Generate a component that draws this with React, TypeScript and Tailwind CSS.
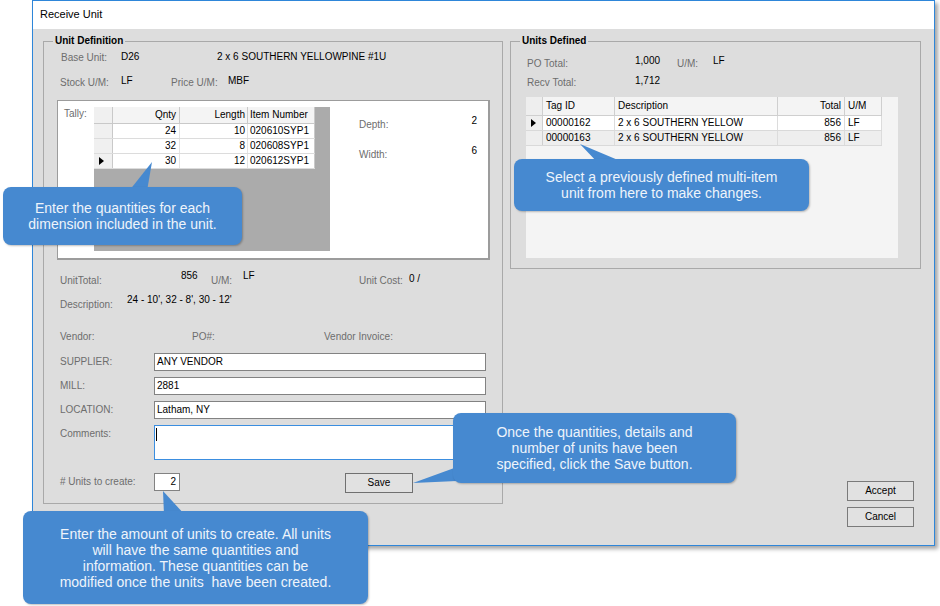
import React from "react";

const Arrow = () => (
    <svg width="5" height="8" viewBox="0 0 5 8" className="block">
        <polygon points="0,0 5,4 0,8" fill="#000" />
    </svg>
);

const Label = ({ className = "", children }: { className?: string; children: React.ReactNode }) => (
    <span className={`text-[#6d6d6d] whitespace-nowrap ${className}`}>{children}</span>
);

const Value = ({ className = "", children }: { className?: string; children: React.ReactNode }) => (
    <span className={`text-black whitespace-nowrap ${className}`}>{children}</span>
);

const TALLY_ROWS = [
    { qnty: 24, length: 10, item: "020610SYP1" },
    { qnty: 32, length: 8, item: "020608SYP1" },
    { qnty: 30, length: 12, item: "020612SYP1" },
];

const UNITS = [
    { tag: "00000162", desc: "2 x 6 SOUTHERN YELLOW", total: 856, um: "LF" },
    { tag: "00000163", desc: "2 x 6 SOUTHERN YELLOW", total: 856, um: "LF" },
];

function TallyGrid() {
    return (
        <div className="mt-[6px] w-[236px] h-[144px] bg-[#ababab] flex flex-col">
            {/* header */}
            <div className="flex h-[17px] bg-[#f4f4f4] border-b border-[#c9c9c9] w-[221px]">
                <div className="w-[19px] border-r border-[#c9c9c9] bg-[#f0f0f0]" />
                <div className="w-[67px] border-r border-[#c9c9c9] flex items-center justify-end pr-[3px]">Qnty</div>
                <div className="w-[68px] border-r border-[#c9c9c9] flex items-center justify-end pr-[2px]">Length</div>
                <div className="w-[67px] border-r border-[#c9c9c9] flex items-center pl-[2px] whitespace-nowrap">Item Number</div>
            </div>
            {TALLY_ROWS.map((r, i) => (
                <div key={i} className="flex h-[15px] w-[221px] bg-white border-b border-[#dcdcdc]">
                    <div className="w-[19px] bg-[#f0f0f0] border-r border-[#c9c9c9] flex items-center pl-[5px]">
                        {i === 2 ? <Arrow /> : null}
                    </div>
                    <div className="w-[67px] border-r border-[#e3e3e3] flex items-center justify-end pr-[3px]">{r.qnty}</div>
                    <div className="w-[68px] border-r border-[#e3e3e3] flex items-center justify-end pr-[2px]">{r.length}</div>
                    <div className="w-[67px] border-r border-[#c9c9c9] flex items-center pl-[2px]">{r.item}</div>
                </div>
            ))}
        </div>
    );
}

function UnitsGrid() {
    return (
        <div className="mt-[6px] ml-[15px] w-[372px] h-[161px] bg-[#f4f4f4] flex flex-col">
            <div className="flex h-[19px] w-[356px] border-b border-[#cfcfcf]">
                <div className="w-[17px] bg-[#eeeeee] border-r border-[#cfcfcf]" />
                <div className="w-[72px] border-r border-[#cfcfcf] flex items-center pl-[3px]">Tag ID</div>
                <div className="w-[163px] border-r border-[#cfcfcf] flex items-center pl-[3px]">Description</div>
                <div className="w-[67px] border-r border-[#cfcfcf] flex items-center justify-end pr-[3px]">Total</div>
                <div className="w-[37px] border-r border-[#cfcfcf] flex items-center pl-[3px]">U/M</div>
            </div>
            {UNITS.map((u, i) => (
                <div
                    key={u.tag}
                    className={`flex h-[15px] w-[356px] border-b border-[#d9d9d9] ${i === 0 ? "bg-white" : "bg-[#eeeeee]"}`}
                >
                    <div className="w-[17px] bg-[#eeeeee] border-r border-[#cfcfcf] flex items-center pl-[5px]">
                        {i === 0 ? <Arrow /> : null}
                    </div>
                    <div className="w-[72px] border-r border-[#dcdcdc] flex items-center pl-[3px]">{u.tag}</div>
                    <div className="w-[163px] border-r border-[#dcdcdc] flex items-center pl-[3px]">{u.desc}</div>
                    <div className="w-[67px] border-r border-[#dcdcdc] flex items-center justify-end pr-[3px]">{u.total}</div>
                    <div className="w-[37px] border-r border-[#dcdcdc] flex items-center pl-[3px]">{u.um}</div>
                </div>
            ))}
        </div>
    );
}

const TextBox = ({ children }: { children?: React.ReactNode }) => (
    <div className="w-[332px] h-[18px] border border-[#828282] bg-white flex items-center px-[2px] text-black">
        {children}
    </div>
);

function UnitDefinition() {
    return (
        <div className="relative w-[460px] h-[463px] border border-[#a9a9a9] shrink-0 flex flex-col">
            <span className="absolute -top-[7px] left-[9px] px-[2px] bg-[#dddddd] font-bold leading-[12px] text-black">
                Unit Definition
            </span>

            <div className="mt-[8px] h-[16px] flex items-center pl-[17px]">
                <Label className="w-[60px]">Base Unit:</Label>
                <Value className="w-[96px] -translate-y-[1px]">D26</Value>
                <Value className="-translate-y-[1px]">2 x 6 SOUTHERN YELLOWPINE #1U</Value>
            </div>

            <div className="mt-[9px] h-[16px] flex items-center pl-[16px]">
                <Label className="w-[61px]">Stock U/M:</Label>
                <Value className="w-[50px] -translate-y-[2px]">LF</Value>
                <Label className="w-[57px]">Price U/M:</Label>
                <Value className="-translate-y-[2px]">MBF</Value>
            </div>

            {/* Tally panel */}
            <div className="mt-[9px] ml-[13px] w-[433px] h-[160px] border border-[#9c9c9c] border-r-2 border-b-2 bg-white flex">
                <Label className="w-[36px] pl-[6px] pt-[7px] leading-[12px]">Tally:</Label>
                <TallyGrid />
                <div className="ml-[29px] w-[118px] flex flex-col">
                    <div className="mt-[16px] h-[16px] flex items-center justify-between">
                        <Label>Depth:</Label>
                        <Value className="-translate-y-[4px]">2</Value>
                    </div>
                    <div className="mt-[14px] h-[16px] flex items-center justify-between">
                        <Label>Width:</Label>
                        <Value className="-translate-y-[4px]">6</Value>
                    </div>
                </div>
            </div>

            <div className="mt-[13px] h-[16px] flex items-center pl-[16px]">
                <Label className="w-[121px]">UnitTotal:</Label>
                <Value className="w-[30px] -translate-y-[5px]">856</Value>
                <Label className="w-[32px]">U/M:</Label>
                <Value className="w-[116px] -translate-y-[5px]">LF</Value>
                <Label className="w-[50px]">Unit Cost:</Label>
                <Value className="-translate-y-[2px]">0 /</Value>
            </div>

            <div className="mt-[8px] h-[16px] flex items-center pl-[16px]">
                <Label className="w-[67px]">Description:</Label>
                <Value className="-translate-y-[5px]">24 - 10', 32 - 8', 30 - 12'</Value>
            </div>

            <div className="mt-[16px] h-[16px] flex items-center pl-[16px]">
                <Label className="w-[132px]">Vendor:</Label>
                <Label className="w-[132px]">PO#:</Label>
                <Label>Vendor Invoice:</Label>
            </div>

            <div className="mt-[8px] h-[18px] flex items-center pl-[16px]">
                <Label className="w-[94px]">SUPPLIER:</Label>
                <TextBox>ANY VENDOR</TextBox>
            </div>
            <div className="mt-[6px] h-[18px] flex items-center pl-[16px]">
                <Label className="w-[94px]">MILL:</Label>
                <TextBox>2881</TextBox>
            </div>
            <div className="mt-[6px] h-[18px] flex items-center pl-[16px]">
                <Label className="w-[94px]">LOCATION:</Label>
                <TextBox>Latham, NY</TextBox>
            </div>
            <div className="mt-[6px] h-[35px] flex items-start pl-[16px]">
                <Label className="w-[94px] pt-[3px] leading-[12px]">Comments:</Label>
                <div className="w-[332px] h-[35px] border border-[#3b8ee0] bg-white pl-[1px] pt-[2px]">
                    <div className="w-[1px] h-[13px] bg-black" />
                </div>
            </div>

            <div className="mt-[13px] flex items-start pl-[16px]">
                <Label className="w-[94px] h-[18px] flex items-center">{"# Units to create:"}</Label>
                <div className="w-[26px] h-[18px] border border-[#828282] bg-white flex items-center justify-end pr-[3px] text-black">
                    2
                </div>
                <button className="ml-[165px] w-[68px] h-[20px] border border-[#707070] bg-[#e1e1e1] flex items-center justify-center text-black text-[10px]">
                    Save
                </button>
            </div>
        </div>
    );
}

function UnitsDefined() {
    return (
        <div className="relative w-[411px] h-[228px] border border-[#a9a9a9] flex flex-col">
            <span className="absolute -top-[7px] left-[9px] px-[2px] bg-[#dddddd] font-bold leading-[12px] text-black">
                Units Defined
            </span>
            <div className="mt-[14px] h-[16px] flex items-center pl-[16px]">
                <Label className="w-[108px]">PO Total:</Label>
                <Value className="w-[42px] -translate-y-[3px]">1,000</Value>
                <Label className="w-[36px]">U/M:</Label>
                <Value className="-translate-y-[3px]">LF</Value>
            </div>
            <div className="mt-[3px] h-[16px] flex items-center pl-[16px]">
                <Label className="w-[108px]">Recv Total:</Label>
                <Value className="-translate-y-[2px]">1,712</Value>
            </div>
            <UnitsGrid />
        </div>
    );
}

export default function App() {
    return (
        <div className="relative w-[940px] h-[606px] bg-white overflow-hidden font-['Liberation_Sans',Arial,sans-serif] text-[10px] leading-[12px] text-black">
            {/* Dialog window */}
            <div className="ml-[32px] w-[903px] h-[546px] border border-[#2e86d9] bg-[#dddddd] shadow-[3px_3px_4px_rgba(0,0,0,0.35)] flex flex-col">
                <div className="h-[28px] bg-white flex items-center pl-[7px] pb-[2px] text-[11px]">Receive Unit</div>
                <div className="flex pl-[10px] pt-[12px] gap-[7px]">
                    <UnitDefinition />
                    <div className="flex flex-col w-[411px]">
                        <UnitsDefined />
                        <div className="mt-[212px] mr-[7px] self-end flex flex-col gap-[6px]">
                            <button className="w-[67px] h-[20px] border border-[#7a7a7a] bg-[#e1e1e1] flex items-center justify-center text-[10px]">
                                Accept
                            </button>
                            <button className="w-[67px] h-[20px] border border-[#7a7a7a] bg-[#e1e1e1] flex items-center justify-center text-[10px]">
                                Cancel
                            </button>
                        </div>
                    </div>
                </div>
            </div>

            {/* Callout pointers */}
            <svg className="absolute top-0 left-0 pointer-events-none" width="940" height="606">
                <g fill="#4689d0">
                    <polygon points="152,162 129,191 147,191" />
                    <polygon points="580,144 598,163 625,163" />
                    <polygon points="413,483 457,467 457,481" />
                    <polygon points="163,491 164,515 185,515" />
                </g>
            </svg>

            {/* Callouts */}
            <div className="absolute left-[3px] top-[187px] w-[239px] h-[58px] rounded-[8px] bg-[#4689d0] shadow-[1px_1px_2px_rgba(0,0,0,0.25)] flex items-center justify-center text-center text-[14px] leading-[16px] text-[#eef4fb]">
                <span>
                    Enter the quantities for each
                    <br />
                    dimension included in the unit.
                </span>
            </div>
            <div className="absolute left-[514px] top-[159px] w-[295px] h-[52px] rounded-[8px] bg-[#4689d0] shadow-[1px_1px_2px_rgba(0,0,0,0.25)] flex items-center justify-center text-center text-[14px] leading-[16px] text-[#eef4fb]">
                <span>
                    Select a previously defined multi-item
                    <br />
                    unit from here to make changes.
                </span>
            </div>
            <div className="absolute left-[453px] top-[413px] w-[283px] h-[70px] rounded-[8px] bg-[#4689d0] shadow-[1px_1px_2px_rgba(0,0,0,0.25)] flex items-center justify-center text-center text-[14px] leading-[16px] text-[#eef4fb]">
                <span>
                    Once the quantities, details and
                    <br />
                    number of units have been
                    <br />
                    specified, click the Save button.
                </span>
            </div>
            <div className="absolute left-[23px] top-[511px] w-[345px] h-[93px] rounded-[8px] bg-[#4689d0] shadow-[1px_1px_2px_rgba(0,0,0,0.25)] flex items-center justify-center text-center text-[14px] leading-[16px] text-[#eef4fb]">
                <span>
                    Enter the amount of units to create. All units
                    <br />
                    will have the same quantities and
                    <br />
                    information. These quantities can be
                    <br />
                    modified once the units&nbsp; have been created.
                </span>
            </div>
        </div>
    );
}
